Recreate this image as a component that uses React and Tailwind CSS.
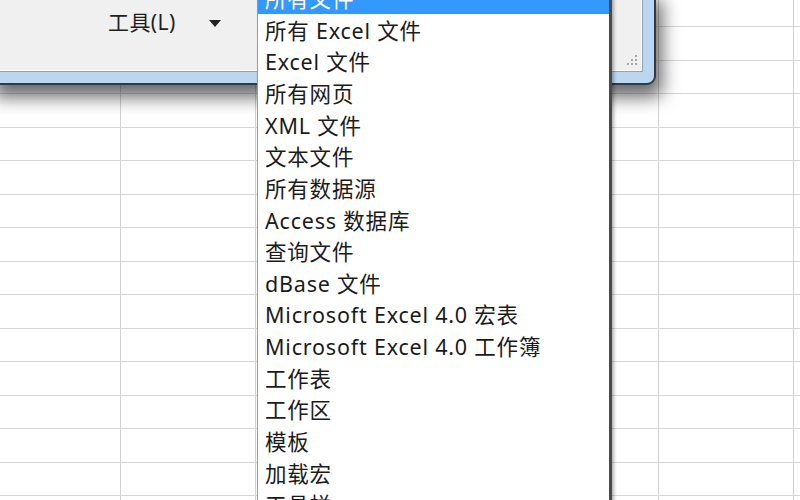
import React from "react";

const items = [
  "所有文件",
  "所有 Excel 文件",
  "Excel 文件",
  "所有网页",
  "XML 文件",
  "文本文件",
  "所有数据源",
  "Access 数据库",
  "查询文件",
  "dBase 文件",
  "Microsoft Excel 4.0 宏表",
  "Microsoft Excel 4.0 工作簿",
  "工作表",
  "工作区",
  "模板",
  "加载宏",
  "工具栏",
];

const rows = Array.from({ length: 17 });
const cols = Array.from({ length: 7 });

export default function App() {
  return (
    <div
      className="relative w-[800px] h-[500px] overflow-hidden bg-white"
      style={{ fontFamily: '"Noto Sans", "Noto Sans CJK SC", sans-serif' }}
    >
      {/* spreadsheet grid */}
      <div className="flex flex-col mt-[-6.5px] ml-[-13.5px]">
        {rows.map((_, r) => (
          <div key={r} className="flex h-[33.5px] shrink-0 border-b border-[#d6d6d6]">
            {cols.map((_, c) => (
              <div key={c} className="w-[134.5px] shrink-0 border-r border-[#d2d2d2]" />
            ))}
          </div>
        ))}
      </div>

      {/* dialog window */}
      <div className="absolute left-[-12px] top-[-12px] w-[668px] h-[97px] rounded-br-[9px] border-2 border-[#2f3a45] bg-[#bcd6ef] pr-[11px] pb-[11px] shadow-[6px_12px_18px_rgba(0,0,0,0.6)]">
        <div className="relative h-full w-full border-r border-b border-[#8fa3b8] bg-[#f0f0f0] shadow-[inset_-1px_-1px_0_#ffffff]">
          <div className="flex items-center h-[64px] pl-[118px] pt-[1px]">
            <span className="text-[21px] text-[#1e1e1e] tracking-[0.4px]">工具(L)</span>
            <svg className="ml-[33px] mt-[1px]" width="12" height="7" viewBox="0 0 12 7">
              <path d="M0 0 H12 L6 7 Z" fill="#222" />
            </svg>
          </div>
          {/* resize grip */}
          <svg className="absolute right-[4px] bottom-[4px]" width="14" height="14" viewBox="0 0 14 14">
            {[
              [11, 2],
              [7, 6],
              [11, 6],
              [3, 10],
              [7, 10],
              [11, 10],
            ].map(([x, y], i) => (
              <rect key={i} x={x} y={y} width="2" height="2" fill="#a7a7a7" />
            ))}
          </svg>
        </div>
      </div>

      {/* dropdown list */}
      <div className="absolute left-[257px] top-[-18px] w-[355px] bg-white border-l border-[#9a9a9a] border-r-[3px] border-r-[#4a4a4a] shadow-[2px_0_3px_rgba(0,0,0,0.3)]">
        {items.map((t, i) => (
          <div
            key={i}
            className={
              "h-[31.65px] flex items-center pl-[7px] pt-[2px] text-[21.5px] tracking-[0.8px] leading-none whitespace-nowrap " +
              (i === 0 ? "bg-[#3399ff] text-white" : "text-[#1b1b1b]")
            }
          >
            {t}
          </div>
        ))}
      </div>
    </div>
  );
}
